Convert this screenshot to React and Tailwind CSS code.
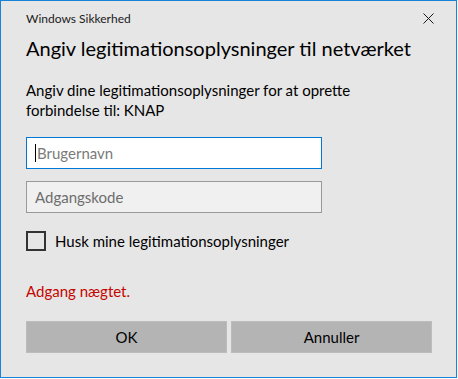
export default function App() {
  const font = { fontFamily: 'Lato, "Segoe UI", sans-serif' };
  return (
    <div className="w-[458px] h-[379px] bg-white">
      <div
        className="w-[457px] h-[378px] border border-[#1883d7] bg-[#e6e6e6] flex flex-col pl-[25px] pr-[24px] text-[#000]"
        style={font}
      >
        <div className="h-[33px] flex items-center justify-between">
          <span className="text-[12px] leading-none text-[#1a1a1a] mt-[2px]">Windows Sikkerhed</span>
          <svg width="11" height="11" viewBox="0 0 11 11" className="mr-[-2px] mt-[2px]">
            <path d="M0.5 0.5 L10.5 10.5 M10.5 0.5 L0.5 10.5" stroke="#1a1a1a" strokeWidth="1" />
          </svg>
        </div>
        <div className="text-[20px] leading-[28px] text-[#000] whitespace-nowrap">
          Angiv legitimationsoplysninger til netværket
        </div>
        <div className="text-[15px] leading-[20px] text-[#000] mt-[18px] whitespace-nowrap">
          Angiv dine legitimationsoplysninger for at oprette
          <br />
          forbindelse til: KNAP
        </div>
        <div className="mt-[17px] w-[296px] h-[32px] border border-[#0078d7] bg-white flex items-center pl-[8px]">
          <span className="w-[1px] h-[18px] bg-black mr-[1px]"></span>
          <span className="text-[15px] text-[#7a7a7a] leading-none">Brugernavn</span>
        </div>
        <div className="mt-[12px] w-[296px] h-[32px] border border-[#999999] bg-[#f0f0f0] flex items-center pl-[8px]">
          <span className="text-[15px] text-[#6d6d6d] leading-none">Adgangskode</span>
        </div>
        <div className="mt-[18px] flex items-center">
          <span className="w-[20px] h-[20px] border-2 border-[#333333] bg-transparent"></span>
          <span className="ml-[9px] text-[15px] leading-none text-[#000]">Husk mine legitimationsoplysninger</span>
        </div>
        <div className="mt-[30px] text-[15px] leading-[20px] text-[#c50500]">Adgang nægtet.</div>
        <div className="mt-[20px] flex gap-[4px]">
          <button className="w-[201px] h-[32px] bg-[#b4b4b4] border border-[#bcbcbc] text-[15px] text-black">OK</button>
          <button className="w-[201px] h-[32px] bg-[#b4b4b4] border border-[#bcbcbc] text-[15px] text-black">Annuller</button>
        </div>
      </div>
    </div>
  );
}
